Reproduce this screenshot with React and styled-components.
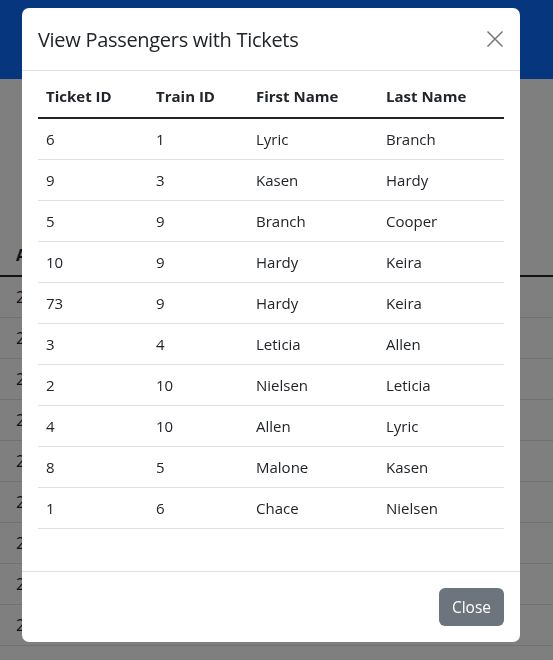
import React from "react";
import styled, { createGlobalStyle } from "styled-components";

const passengers = [
  [6, 1, "Lyric", "Branch"],
  [9, 3, "Kasen", "Hardy"],
  [5, 9, "Branch", "Cooper"],
  [10, 9, "Hardy", "Keira"],
  [73, 9, "Hardy", "Keira"],
  [3, 4, "Leticia", "Allen"],
  [2, 10, "Nielsen", "Leticia"],
  [4, 10, "Allen", "Lyric"],
  [8, 5, "Malone", "Kasen"],
  [1, 6, "Chace", "Nielsen"],
];

const GlobalStyle = createGlobalStyle`
  html, body {
    margin: 0;
    padding: 0;
    height: 660px;
    overflow: hidden;
    background: #fff;
    font-family: "Open Sans", "Noto Sans", sans-serif;
    color: #212529;
  }
`;

const Page = styled.div`
  width: 100%;
  height: 660px;
  background: #fff;
`;

const Navbar = styled.div`
  height: 79px;
  background: #0d6efd;
`;

const PageContent = styled.div`
  padding-top: 156px;
`;

const BgTable = styled.table`
  width: 100%;
  border-collapse: collapse;
  font-size: 16px;

  th {
    text-align: left;
    font-weight: 700;
    padding: 8px 16px;
    height: 24px;
    border-bottom: 2px solid #212529;
  }

  td {
    padding: 8px 16px;
    height: 24px;
    border-bottom: 1px solid #dee2e6;
  }
`;

const Backdrop = styled.div`
  position: fixed;
  inset: 0;
  background: rgba(0, 0, 0, 0.5);
`;

const Modal = styled.div`
  position: fixed;
  top: 8px;
  left: 22px;
  width: 498px;
  background: #fff;
  border-radius: 7px;
  display: flex;
  flex-direction: column;
  overflow: hidden;
`;

const Header = styled.div`
  display: flex;
  align-items: center;
  justify-content: space-between;
  height: 62px;
  padding: 0 16px;
  border-bottom: 1px solid #dee2e6;
`;

const Title = styled.h5`
  margin: 0;
  font-size: 20px;
  font-weight: 400;
  letter-spacing: -0.3px;
  color: #212529;
`;

const CloseX = styled.button`
  border: 0;
  background: none;
  padding: 0;
  width: 18px;
  height: 18px;
  display: flex;
  cursor: pointer;
`;

const Body = styled.div`
  padding: 8px 16px 42px;
`;

const Table = styled.table`
  width: 100%;
  border-collapse: collapse;
  font-size: 15px;
  table-layout: fixed;

  th {
    text-align: left;
    font-weight: 700;
    padding: 6px 8px 10px;
    height: 22px;
    line-height: 22px;
    border-bottom: 2px solid #212529;
  }

  td {
    padding: 8px;
    height: 24px;
    line-height: 24px;
    border-bottom: 1px solid #dee2e6;
  }
`;

const Col = styled.col`
  width: ${(p) => p.w}px;
`;

const Footer = styled.div`
  display: flex;
  justify-content: flex-end;
  padding: 16px;
  border-top: 1px solid #dee2e6;
`;

const Button = styled.button`
  background: #6c757d;
  color: #fff;
  border: 0;
  border-radius: 6px;
  height: 38px;
  padding: 0 13px;
  font-family: "Open Sans", "Noto Sans", sans-serif;
  font-size: 15.5px;
  cursor: pointer;
`;

export default function App() {
  return (
    <>
      <GlobalStyle />
      <Page>
        <Navbar />
        <PageContent>
          <BgTable>
            <thead>
              <tr>
                <th>A</th>
              </tr>
            </thead>
            <tbody>
              {Array.from({ length: 9 }).map((_, i) => (
                <tr key={i}>
                  <td>2</td>
                </tr>
              ))}
            </tbody>
          </BgTable>
        </PageContent>
      </Page>
      <Backdrop />
      <Modal>
        <Header>
          <Title>View Passengers with Tickets</Title>
          <CloseX aria-label="Close">
            <svg width="18" height="18" viewBox="0 0 18 18">
              <path d="M1.5 1.5 L16.5 16.5 M16.5 1.5 L1.5 16.5" stroke="#777" strokeWidth="1.5" fill="none" />
            </svg>
          </CloseX>
        </Header>
        <Body>
          <Table>
            <colgroup>
              <Col w={110} />
              <Col w={100} />
              <Col w={130} />
              <Col w={126} />
            </colgroup>
            <thead>
              <tr>
                <th>Ticket ID</th>
                <th>Train ID</th>
                <th>First Name</th>
                <th>Last Name</th>
              </tr>
            </thead>
            <tbody>
              {passengers.map((p, i) => (
                <tr key={i}>
                  {p.map((v, j) => (
                    <td key={j}>{v}</td>
                  ))}
                </tr>
              ))}
            </tbody>
          </Table>
        </Body>
        <Footer>
          <Button>Close</Button>
        </Footer>
      </Modal>
    </>
  );
}
